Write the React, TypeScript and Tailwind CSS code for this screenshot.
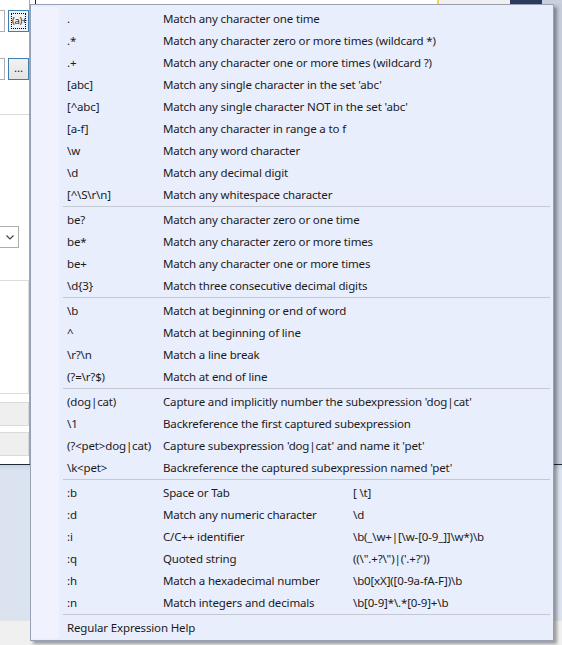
import React from "react";

type Row = { a: string; b: string; c?: string };

const groups: Row[][] = [
  [
    { a: ".", b: "Match any character one time" },
    { a: ".*", b: "Match any character zero or more times (wildcard *)" },
    { a: ".+", b: "Match any character one or more times (wildcard ?)" },
    { a: "[abc]", b: "Match any single character in the set 'abc'" },
    { a: "[^abc]", b: "Match any single character NOT in the set 'abc'" },
    { a: "[a-f]", b: "Match any character in range a to f" },
    { a: "\\w", b: "Match any word character" },
    { a: "\\d", b: "Match any decimal digit" },
    { a: "[^\\S\\r\\n]", b: "Match any whitespace character" },
  ],
  [
    { a: "be?", b: "Match any character zero or one time" },
    { a: "be*", b: "Match any character zero or more times" },
    { a: "be+", b: "Match any character one or more times" },
    { a: "\\d{3}", b: "Match three consecutive decimal digits" },
  ],
  [
    { a: "\\b", b: "Match at beginning or end of word" },
    { a: "^", b: "Match at beginning of line" },
    { a: "\\r?\\n", b: "Match a line break" },
    { a: "(?=\\r?$)", b: "Match at end of line" },
  ],
  [
    { a: "(dog|cat)", b: "Capture and implicitly number the subexpression 'dog|cat'" },
    { a: "\\1", b: "Backreference the first captured subexpression" },
    { a: "(?<pet>dog|cat)", b: "Capture subexpression 'dog|cat' and name it 'pet'" },
    { a: "\\k<pet>", b: "Backreference the captured subexpression named 'pet'" },
  ],
  [
    { a: ":b", b: "Space or Tab", c: "[ \\t]" },
    { a: ":d", b: "Match any numeric character", c: "\\d" },
    { a: ":i", b: "C/C++ identifier", c: "\\b(_\\w+|[\\w-[0-9_]]\\w*)\\b" },
    { a: ":q", b: "Quoted string", c: "((\\\".+?\\\")|('.+?'))" },
    { a: ":h", b: "Match a hexadecimal number", c: "\\b0[xX]([0-9a-fA-F])\\b" },
    { a: ":n", b: "Match integers and decimals", c: "\\b[0-9]*\\.*[0-9]+\\b" },
  ],
];

function MenuRow({ r }: { r: Row }) {
  return (
    <div className="flex h-[22px] items-center">
      <div className="w-[28px] shrink-0 self-stretch bg-[#f0f3fd]" />
      <div className="w-[8px] shrink-0" />
      <div className="w-[96px] shrink-0 whitespace-pre pt-[2px]">{r.a}</div>
      <div className="w-[190px] shrink-0 whitespace-pre pt-[2px]">{r.b}</div>
      {r.c && <div className="whitespace-pre pt-[2px]">{r.c}</div>}
    </div>
  );
}

function Sep() {
  return (
    <div className="flex h-[3px]">
      <div className="w-[28px] shrink-0 bg-[#f0f3fd]" />
      <div className="flex flex-1 items-center pl-[4px] pr-[3px]">
        <div className="h-px w-full bg-[#c3c8d2]" />
      </div>
    </div>
  );
}

export default function App() {
  return (
    <div
      className="relative h-[645px] w-[562px] overflow-hidden bg-white text-[11.5px] tracking-[-0.15px] text-[#1b1b1b]"
      style={{ fontFamily: '"Segoe UI", "Noto Sans", sans-serif' }}
    >
      <div className="grid h-full grid-rows-[465px_155px_25px]">
        {/* top dialog region */}
        <div className="flex border-b border-[#1e2a3a]">
          {/* left visible strip of dialog */}
          <div className="flex w-[30px] shrink-0 flex-col border-r border-[#a6a6a6] bg-white">
            <div className="mt-[10px] flex h-[22px] gap-[3px]">
              <div className="w-[5px] border-y border-r border-[#abadb3] bg-white" />
              <div className="flex w-[21px] items-center border border-[#3c7fb1] bg-[#eef3f8] p-[2px]">
                <div className="flex h-full w-full items-center border border-dotted border-black text-[9.5px] leading-none tracking-[-0.4px] whitespace-pre">
                  (a)+
                </div>
              </div>
            </div>
            <div className="mt-[26px] flex h-[22px] gap-[3px]">
              <div className="w-[5px] border-y border-r border-[#abadb3] bg-white" />
              <div className="flex w-[21px] items-center justify-center border border-[#3c7fb1] bg-gradient-to-b from-[#f2f2f2] to-[#e3e3e3] pb-[3px] leading-none">
                ...
              </div>
            </div>
            <div className="mt-[34px] h-px w-[29px] bg-[#dadada]" />
            <div className="mt-[111px] flex h-[22px] w-[19px] items-center justify-end border-y border-r border-[#acacac] bg-white pr-[4px]">
              <svg width="8" height="5" viewBox="0 0 8 5">
                <path d="M0.5 0.5 L4 4 L7.5 0.5" fill="none" stroke="#444" strokeWidth="1.2" />
              </svg>
            </div>
            <div className="mt-[32px] h-[114px] w-[29px] border-y border-r border-[#dcdcdc] bg-white" />
            <div className="mt-[8px] h-[24px] w-[29px] border-y border-r border-[#dadada] bg-[#efefef]" />
            <div className="mt-[6px] h-[24px] w-[29px] border-y border-r border-[#dadada] bg-[#efefef]" />
          </div>
          {/* remainder */}
          <div className="flex flex-1 flex-col">
            <div className="flex h-[4px]">
              <div className="w-[5px] bg-white" />
              <div className="w-px bg-[#222]" />
              <div className="w-[401px] bg-white" />
              <div className="w-[2px] bg-[#f5d34a]" />
              <div className="w-[71px] bg-[#f0f0f0]" />
              <div className="w-[32px] bg-[#2b3b5e]" />
              <div className="flex-1 bg-[#c9d1de]" />
            </div>
            <div className="flex flex-1">
              <div className="flex-1 bg-white" />
              <div className="w-[10px] bg-[#c5cdda]" />
            </div>
          </div>
        </div>
        <div className="bg-[#dae3ef] bg-gradient-to-b from-[#c9d4e2] to-[#dae3ef] bg-[length:100%_6px] bg-no-repeat" />
        <div className="border-t border-[#e3e3e3] bg-[#f0f0f0]" />
      </div>

      {/* popup menu */}
      <div className="absolute left-[30px] top-[4px] w-[524px] border border-[#97a1b3] bg-[#e9eefc] py-[2px] shadow-[3px_3px_3px_rgba(0,0,0,0.35)]">
        {groups.map((g, gi) => (
          <React.Fragment key={gi}>
            {g.map((r, ri) => (
              <MenuRow key={ri} r={r} />
            ))}
            <Sep />
          </React.Fragment>
        ))}
        <div className="flex h-[22px] items-center">
          <div className="w-[28px] shrink-0 self-stretch bg-[#f0f3fd]" />
          <div className="w-[8px] shrink-0" />
          <div className="pt-[2px]">Regular Expression Help</div>
        </div>
      </div>
    </div>
  );
}
